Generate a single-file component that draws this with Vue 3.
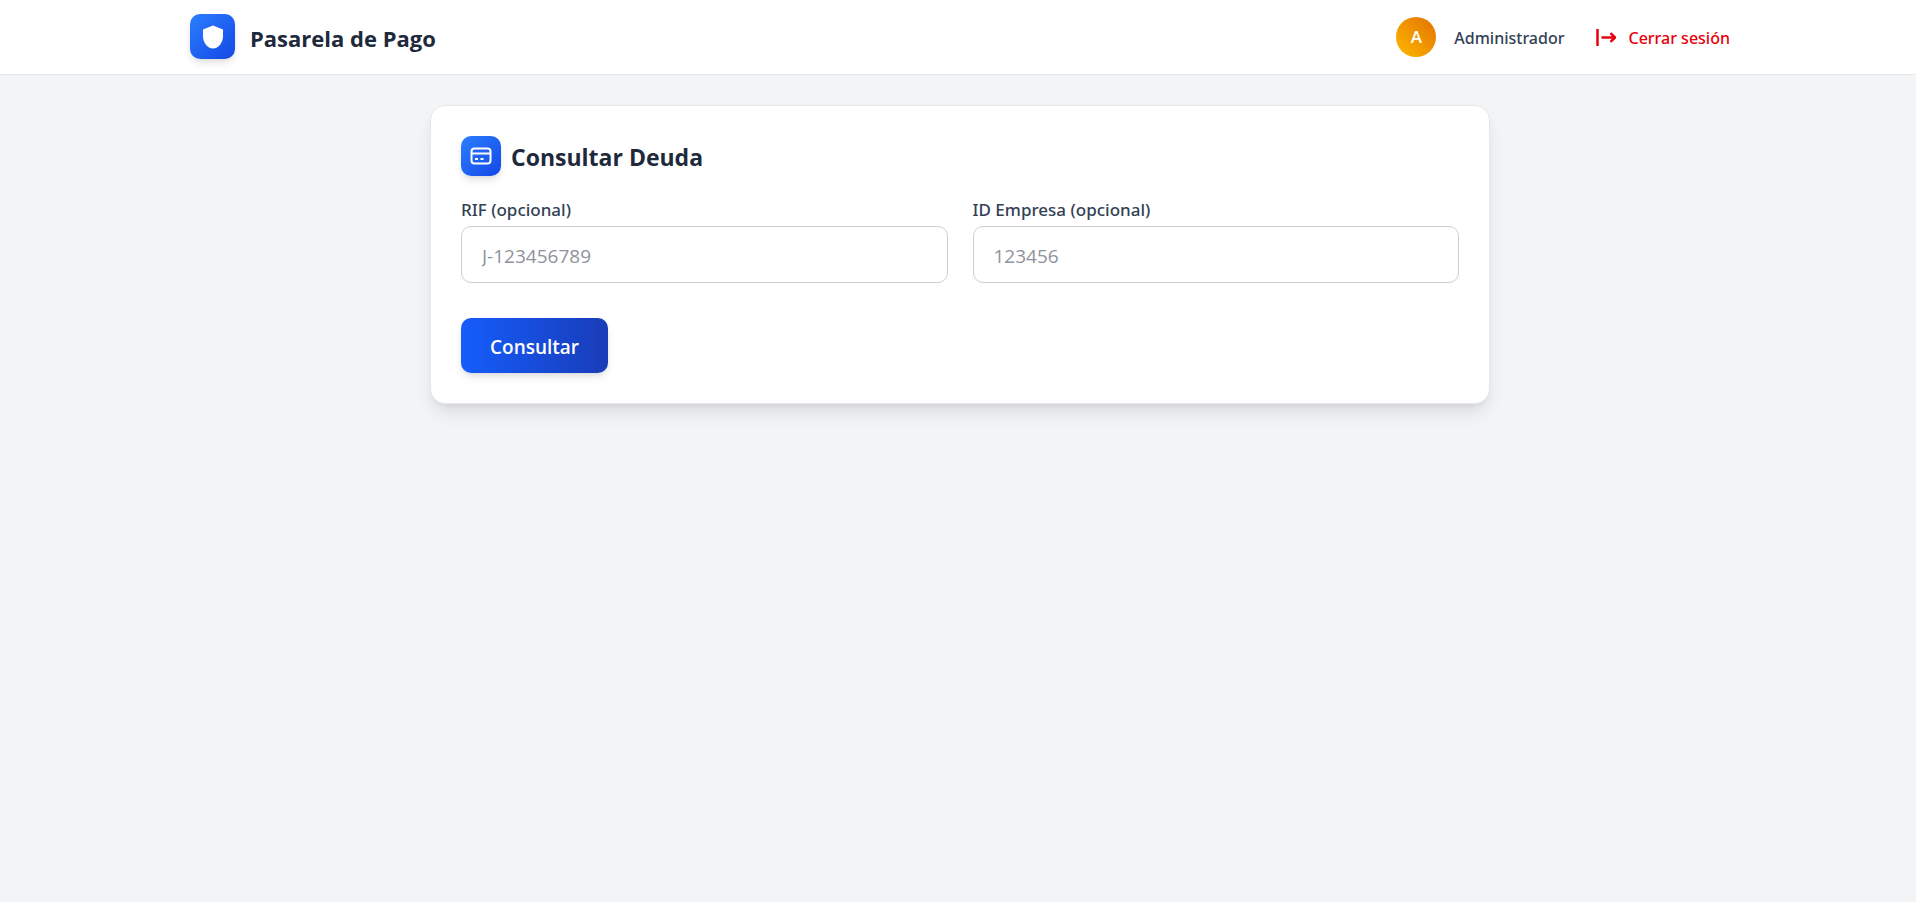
<script setup>
import { ref } from 'vue'

const rif = ref('')
const companyId = ref('')
</script>

<template>
  <div class="page">
    <header class="topbar">
      <div class="topbar-inner">
        <div class="brand">
          <span class="logo">
            <svg width="26" height="26" viewBox="0 0 26 26" aria-hidden="true">
              <path d="M13 1.500 L23 5.400 V12 C23 18.600 18.600 24.500 13 24.500 C7.400 24.500 3 18.600 3 12 V5.400 Z" fill="#fff" />
            </svg>
          </span>
          <span class="brand-name">Pasarela de Pago</span>
        </div>
        <div class="account">
          <span class="avatar">A</span>
          <span class="user-name">Administrador</span>
          <button type="button" class="logout">
            <svg width="20" height="20" viewBox="0 0 20 20" fill="none" stroke="currentColor" stroke-width="2.500" stroke-linejoin="round" aria-hidden="true">
              <path d="M1.500 1 V18" />
              <path d="M5.500 9.500 H19" />
              <path d="M14.500 5.200 L19 9.500 L14.500 13.800" />
            </svg>
            <span>Cerrar sesión</span>
          </button>
        </div>
      </div>
    </header>

    <main class="content">
      <section class="card">
        <div class="card-head">
          <span class="card-icon">
            <svg width="22" height="18" viewBox="0 0 22 18" fill="none" stroke="#fff" stroke-width="2" aria-hidden="true">
              <rect x="1.500" y="1.500" width="19" height="15" rx="3" />
              <path d="M1.500 6.500 H20.500" />
              <path d="M5 12 H8 M10.500 12 H13.500" />
            </svg>
          </span>
          <h1>Consultar Deuda</h1>
        </div>
        <form @submit.prevent>
          <div class="fields">
            <div class="field">
              <label for="rif">RIF (opcional)</label>
              <input id="rif" v-model="rif" type="text" placeholder="J-123456789" />
            </div>
            <div class="field">
              <label for="company">ID Empresa (opcional)</label>
              <input id="company" v-model="companyId" type="text" placeholder="123456" />
            </div>
          </div>
          <button type="submit" class="submit">Consultar</button>
        </form>
      </section>
    </main>
  </div>
</template>

<style>
body {
  background: #f3f4f6;
}
</style>

<style scoped>
.page {
  min-height: 100vh;
  background: #f3f4f6;
  font-family: "Open Sans", "Noto Sans", sans-serif;
  color: #1e293b;
}
.page * {
  box-sizing: border-box;
}
.topbar {
  background: #fff;
  border-bottom: 1px solid #e5e7eb;
  padding-left: 4px;
}
.topbar-inner {
  max-width: 1600px;
  margin: 0 auto;
  padding: 14px 30px 15px;
  display: flex;
  align-items: center;
  justify-content: space-between;
}
.brand {
  display: flex;
  align-items: center;
  gap: 15px;
}
.logo,
.card-icon {
  display: flex;
  align-items: center;
  justify-content: center;
  background: linear-gradient(135deg, #2b7fff, #1447e6);
  border-radius: 10px;
  box-shadow: 0 5px 8px -1px rgba(0, 0, 0, 0.1), 0 2px 5px -2px rgba(0, 0, 0, 0.1);
}
.logo {
  width: 45px;
  height: 45px;
}
.brand-name,
h1 {
  margin: 0;
  padding-top: 2px;
  font-size: 23px;
  line-height: 34px;
  font-weight: 700;
}
.brand-name {
  font-size: 22px;
}
.account {
  display: flex;
  align-items: center;
}
.avatar {
  display: flex;
  align-items: center;
  justify-content: center;
  width: 40px;
  height: 40px;
  border-radius: 50%;
  background: linear-gradient(45deg, #ffb900, #e17100);
  color: #fff;
  font-size: 17px;
  font-weight: 600;
}
.user-name,
.logout {
  padding: 2px 0 0;
  font-family: "Noto Sans", sans-serif;
  font-size: 16px;
  line-height: 24px;
  font-weight: 500;
}
.user-name {
  margin: 0 32px 0 18px;
  color: #334155;
}
.logout {
  display: flex;
  align-items: center;
  gap: 12px;
  border: 0;
  background: none;
  color: #e7000b;
  cursor: pointer;
}
.content {
  padding: 30px 0 30px 4px;
}
.card {
  max-width: 1060px;
  margin: 0 auto;
  padding: 30px;
  background: #fff;
  border: 1px solid #e5e7eb;
  border-radius: 15px;
  box-shadow: 0 12px 19px -4px rgba(0, 0, 0, 0.1), 0 5px 8px -5px rgba(0, 0, 0, 0.1);
}
.card-head {
  display: flex;
  align-items: center;
  gap: 10px;
  margin-bottom: 21px;
}
.card-icon {
  width: 40px;
  height: 40px;
}
.fields {
  display: grid;
  grid-template-columns: 1fr 1fr;
  gap: 25px;
  margin-bottom: 35px;
}
label {
  display: block;
  margin-bottom: 4px;
  font-family: "Noto Sans", sans-serif;
  font-size: 17px;
  line-height: 25px;
  font-weight: 500;
  color: #334155;
}
input {
  display: block;
  width: 100%;
  height: 57px;
  padding: 2px 20px 0;
  border: 1px solid #cbcfd7;
  border-radius: 10px;
  background: #fff;
  color: #1e293b;
  font-family: inherit;
  font-size: 19px;
}
input::placeholder {
  color: #8e939b;
  opacity: 1;
}
.submit {
  display: block;
  padding: 14px 29px 11px;
  border: 0;
  border-radius: 10px;
  background: linear-gradient(to right, #155dfc, #193cb8);
  box-shadow: 0 5px 8px -1px rgba(0, 0, 0, 0.1), 0 2px 5px -2px rgba(0, 0, 0, 0.1);
  color: #fff;
  font-family: inherit;
  font-size: 19px;
  line-height: 30px;
  font-weight: 600;
  cursor: pointer;
}
</style>
